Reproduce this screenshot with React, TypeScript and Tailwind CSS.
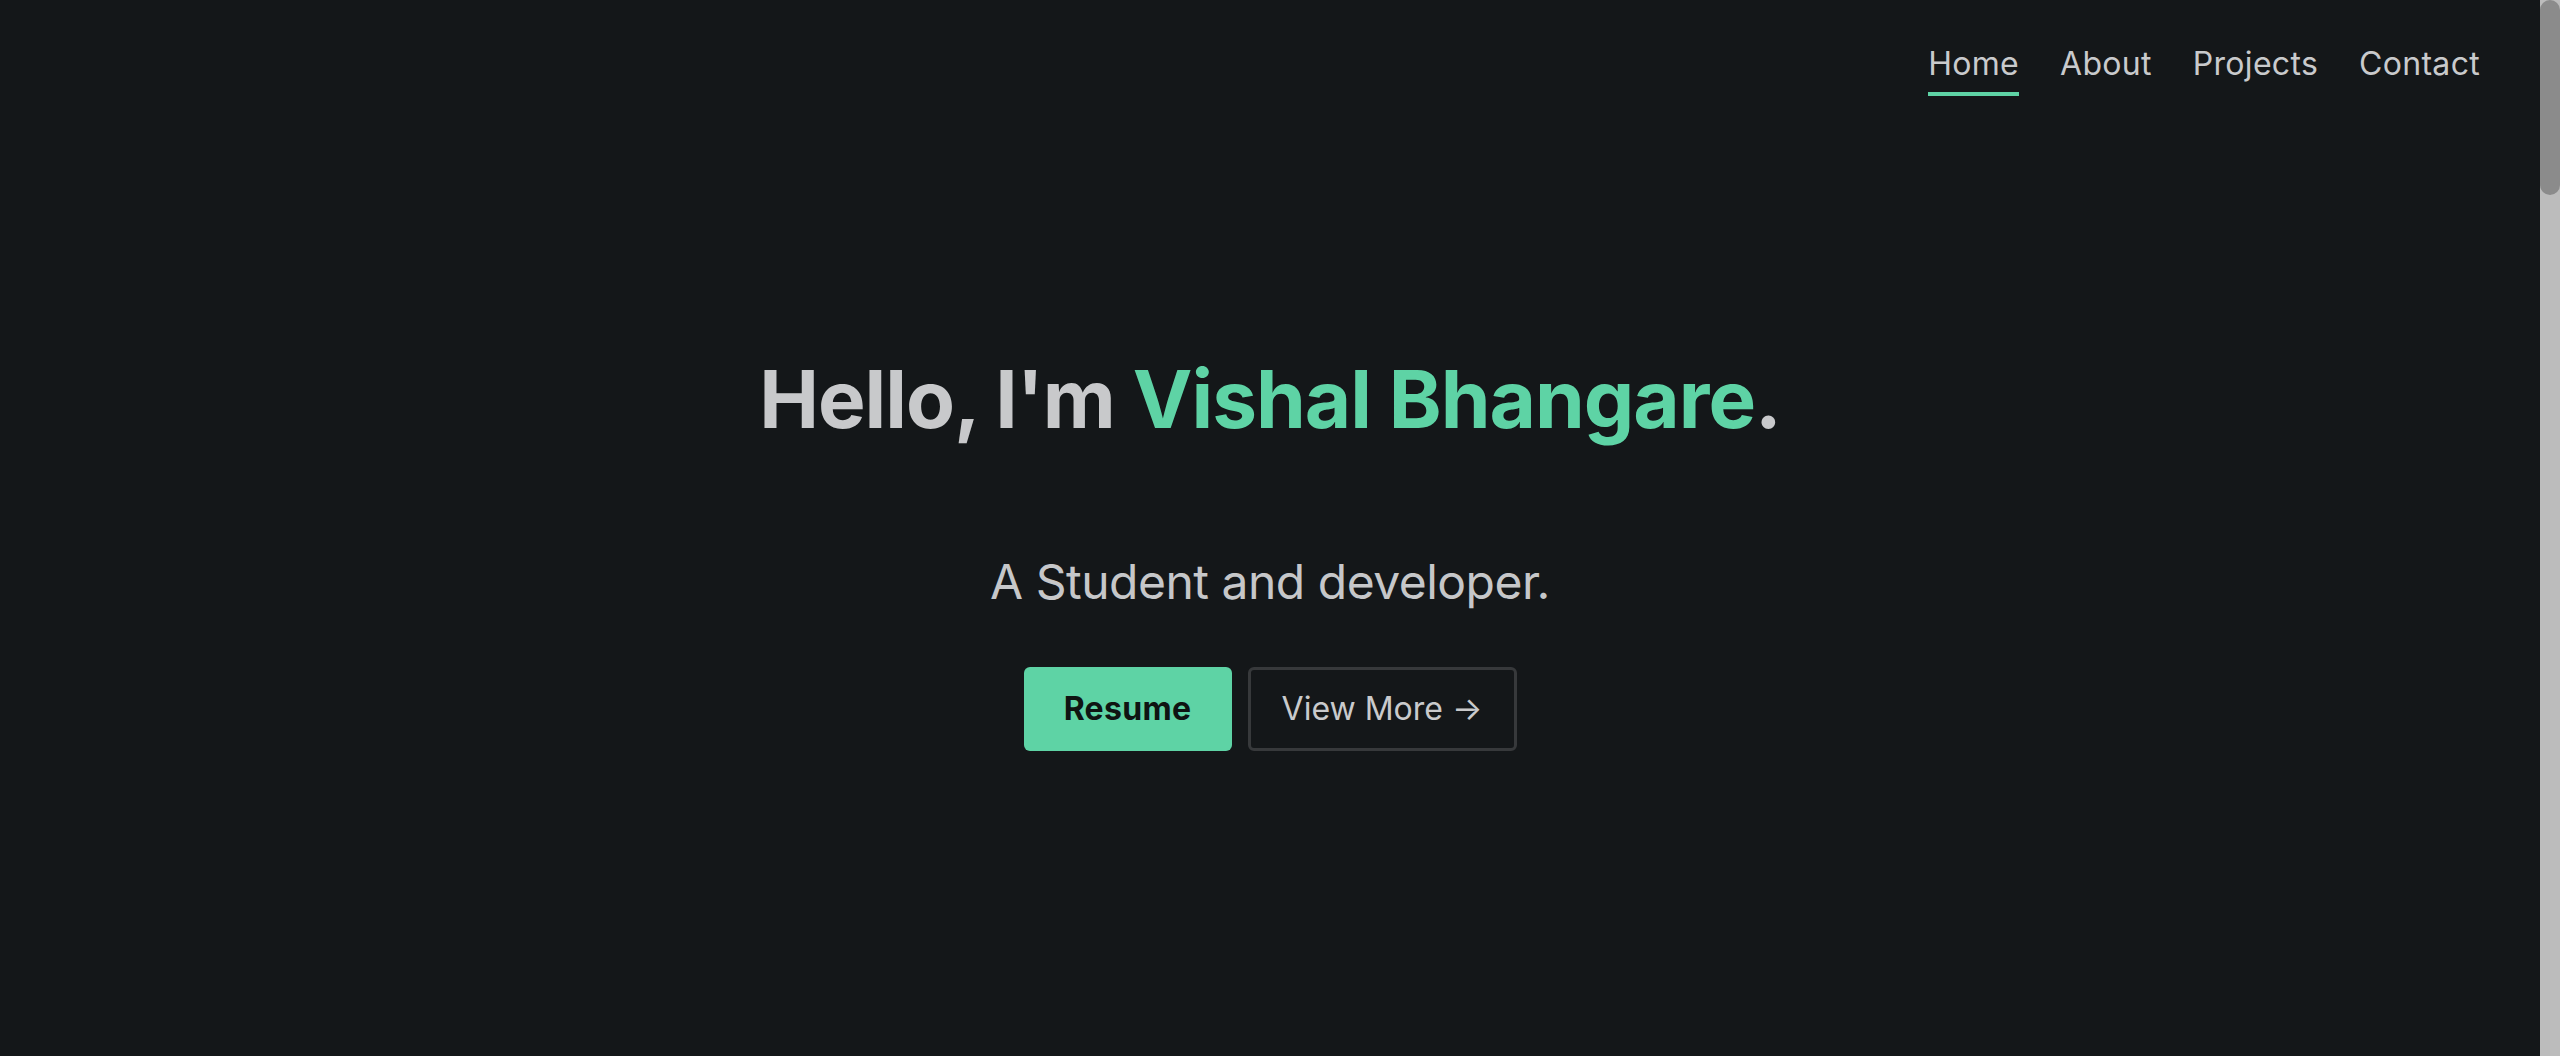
import React from "react";

export default function App() {
  return (
    <div className="flex h-screen w-full overflow-hidden bg-[#141719] font-['Inter',sans-serif]">
      <div className="flex flex-1 flex-col">
        <nav className="flex justify-end gap-[41px] pr-[60px] pt-[48px]">
          {["Home", "About", "Projects", "Contact"].map((item, i) => (
            <a key={item} href="#" className="flex flex-col text-[32px] leading-none tracking-[0.3px] text-[#c9cacc]">
              <span>{item}</span>
              <span className={"mt-[12px] h-[4px] w-full " + (i === 0 ? "bg-[#5ed3a5]" : "bg-transparent")} />
            </a>
          ))}
        </nav>
        <main className="flex flex-col items-center">
          <h1 className="mt-[263px] text-[80px] font-bold leading-none tracking-[-1px] text-[#c8c9cb]">
            Hello, I'm <span className="text-[#5ed3a5]">Vishal Bhangare</span>.
          </h1>
          <p className="mt-[119px] text-[48px] leading-none tracking-[-0.5px] text-[#c6c7c9]">A Student and developer.</p>
          <div className="mt-[61px] flex gap-4">
            <button className="flex h-[84px] w-[208px] items-center justify-center rounded-md bg-[#5ed3a5] text-[32px] font-bold leading-none tracking-[0.3px] text-[#0f1412]">
              Resume
            </button>
            <button className="flex h-[84px] w-[269px] items-center justify-center rounded-md border-[3px] border-[#37393b] text-[32px] leading-none text-[#c9cacc]">
              View More →
            </button>
          </div>
        </main>
      </div>
      <div className="h-full w-5 bg-[#bcbcbc]">
        <div className="h-[195px] w-full rounded-full bg-[#8b8b8b]" />
      </div>
    </div>
  );
}
